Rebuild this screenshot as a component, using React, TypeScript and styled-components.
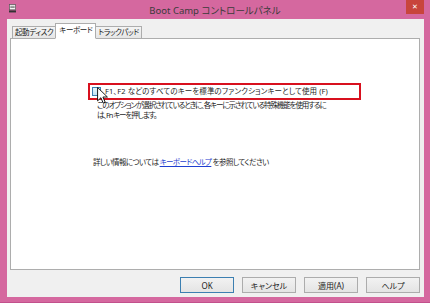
import React from "react";
import styled, { createGlobalStyle } from "styled-components";

const GlobalStyle = createGlobalStyle`
  html, body {
    margin: 0;
    padding: 0;
    background: #d5689f;
  }
  body {
    font-family: "Noto Sans", "Noto Sans CJK JP", sans-serif;
  }
`;

const jp = `"Noto Sans", "Noto Sans CJK JP", sans-serif`;

function App() {
  return (
    <>
      <GlobalStyle />
      <Window>
        <TitleBar>
          <AppIcon viewBox="0 0 8 10">
            <rect x="0.5" y="0.5" width="7" height="6" fill="#f4f4f4" stroke="#555" strokeWidth="0.8" />
            <rect x="1.5" y="2" width="5" height="0.8" fill="#666" />
            <rect x="1.5" y="3.6" width="5" height="0.8" fill="#666" />
            <rect x="0" y="7.2" width="8" height="2.3" fill="#333" />
          </AppIcon>
          <Title>Boot Camp コントロールパネル</Title>
          <CloseButton>✕</CloseButton>
        </TitleBar>

        <Client>
          <TabStrip>
            <Tab>起動ディスク</Tab>
            <Tab $active>キーボード</Tab>
            <Tab>トラックパッド</Tab>
          </TabStrip>

          <Panel>
            <OptionBox>
              <Checkbox />
              <OptionLabel>F1、F2 などのすべてのキーを標準のファンクションキーとして使用 (F)</OptionLabel>
            </OptionBox>
            <Description>
              <DescLine>このオプションが選択されているときに、各キーに示されている特殊機能を使用するに</DescLine>
              <DescLine>は、Fn キーを押します。</DescLine>
            </Description>
            <HelpLine>
              詳しい情報については <HelpLink>キーボードヘルプ</HelpLink> を参照してください
            </HelpLine>

            <Cursor viewBox="0 0 12 19">
              <path
                d="M0.5 0.5 L0.5 15.5 L4.2 12 L6.8 18 L9 17 L6.5 11.2 L11.5 11.2 Z"
                fill="#fff"
                stroke="#000"
                strokeWidth="1"
                strokeLinejoin="miter"
              />
            </Cursor>
          </Panel>

          <Footer>
            <DialogButton $default>OK</DialogButton>
            <DialogButton>キャンセル</DialogButton>
            <DialogButton>適用(A)</DialogButton>
            <DialogButton>ヘルプ</DialogButton>
          </Footer>
        </Client>
      </Window>
    </>
  );
}

const Window = styled.div`
  width: 430px;
  height: 303px;
  background: #d5689f;
  display: flex;
  flex-direction: column;
  box-sizing: border-box;
  border-bottom: 1px solid #c2508c;
`;

const TitleBar = styled.div`
  height: 19px;
  position: relative;
  display: flex;
  align-items: center;
  justify-content: center;
  flex: 0 0 auto;
`;

const AppIcon = styled.svg`
  position: absolute;
  left: 9px;
  top: 4px;
  width: 7px;
  height: 9px;
`;

const Title = styled.span`
  font-family: ${jp};
  font-size: 9.5px;
  color: #3b3b3b;
  font-feature-settings: "palt";
`;

const CloseButton = styled.div`
  position: absolute;
  right: 6px;
  top: 0;
  width: 18px;
  height: 14px;
  background: #c8453c;
  color: #fff;
  font-family: "DejaVu Sans", sans-serif;
  font-size: 7px;
  font-weight: bold;
  display: flex;
  align-items: center;
  justify-content: center;
`;

const Client = styled.div`
  flex: 1;
  margin: 0 6px 5px 7px;
  background: #f0f0f0;
  padding: 5px 4px 0 3px;
  display: flex;
  flex-direction: column;
`;

const TabStrip = styled.div`
  display: flex;
  align-items: flex-end;
  height: 15px;
  padding-left: 2px;
  position: relative;
  z-index: 1;
  margin-bottom: -1px;
`;

const Tab = styled.div<{ $active?: boolean }>`
  font-family: ${jp};
  font-size: 7.5px;
  letter-spacing: -0.4px;
  font-feature-settings: "palt";
  color: #222;
  box-sizing: border-box;
  height: ${(p) => (p.$active ? "16px" : "13px")};
  padding: ${(p) => (p.$active ? "0 3px" : "0 2px")};
  margin: ${(p) => (p.$active ? "0 -1px" : "0")};
  background: ${(p) => (p.$active ? "#fff" : "linear-gradient(#f4f4f4, #e6e6e6)")};
  border: 1px solid #adadad;
  border-bottom-color: ${(p) => (p.$active ? "#fff" : "#adadad")};
  display: flex;
  align-items: center;
  line-height: 1;
  position: relative;
  z-index: ${(p) => (p.$active ? 2 : 1)};
`;

const Panel = styled.div`
  flex: 1;
  background: #fff;
  border: 1px solid #adadad;
  position: relative;
  padding: 44px 0 0 77px;
  display: flex;
  flex-direction: column;
`;

const OptionBox = styled.div`
  width: 267px;
  height: 13px;
  border: 2px solid #d8101e;
  display: flex;
  align-items: center;
  gap: 4px;
  padding-left: 2px;
`;

const Checkbox = styled.div`
  width: 7px;
  height: 7px;
  border: 1px solid #3c7fb1;
  background: linear-gradient(#e6f5fc, #bfe4f6);
  flex: 0 0 auto;
`;

const OptionLabel = styled.span`
  font-family: ${jp};
  font-size: 7.5px;
  letter-spacing: 0.1px;
  font-feature-settings: "palt";
  color: #1e1e1e;
  white-space: nowrap;
  line-height: 1;
`;

const Description = styled.div`
  padding-left: 9px;
  margin-top: 1px;
  display: flex;
  flex-direction: column;
`;

const DescLine = styled.div`
  font-family: ${jp};
  font-size: 7.5px;
  letter-spacing: -1.1px;
  line-height: 9.5px;
  font-feature-settings: "palt";
  color: #1e1e1e;
  white-space: nowrap;
`;

const HelpLine = styled.div`
  font-family: ${jp};
  font-size: 7.5px;
  letter-spacing: -0.6px;
  line-height: 9px;
  font-feature-settings: "palt";
  color: #1e1e1e;
  white-space: nowrap;
  margin-top: 38px;
  padding-left: 5px;
`;

const HelpLink = styled.span`
  color: #1f3fd0;
  text-decoration: underline;
`;

const Cursor = styled.svg`
  position: absolute;
  left: 86px;
  top: 48px;
  width: 11px;
  height: 17px;
`;

const Footer = styled.div`
  height: 27px;
  display: flex;
  justify-content: flex-end;
  align-items: flex-start;
  padding-top: 7px;
  box-sizing: border-box;
  gap: 8px;
`;

const DialogButton = styled.div<{ $default?: boolean }>`
  width: 54px;
  height: 16px;
  box-sizing: border-box;
  border: 1px solid ${(p) => (p.$default ? "#3c7fb1" : "#acacac")};
  background: linear-gradient(#f2f2f2, #e4e4e4);
  font-family: ${jp};
  font-size: 8px;
  font-feature-settings: "palt";
  color: #222;
  display: flex;
  align-items: center;
  justify-content: center;
`;

export default App;
